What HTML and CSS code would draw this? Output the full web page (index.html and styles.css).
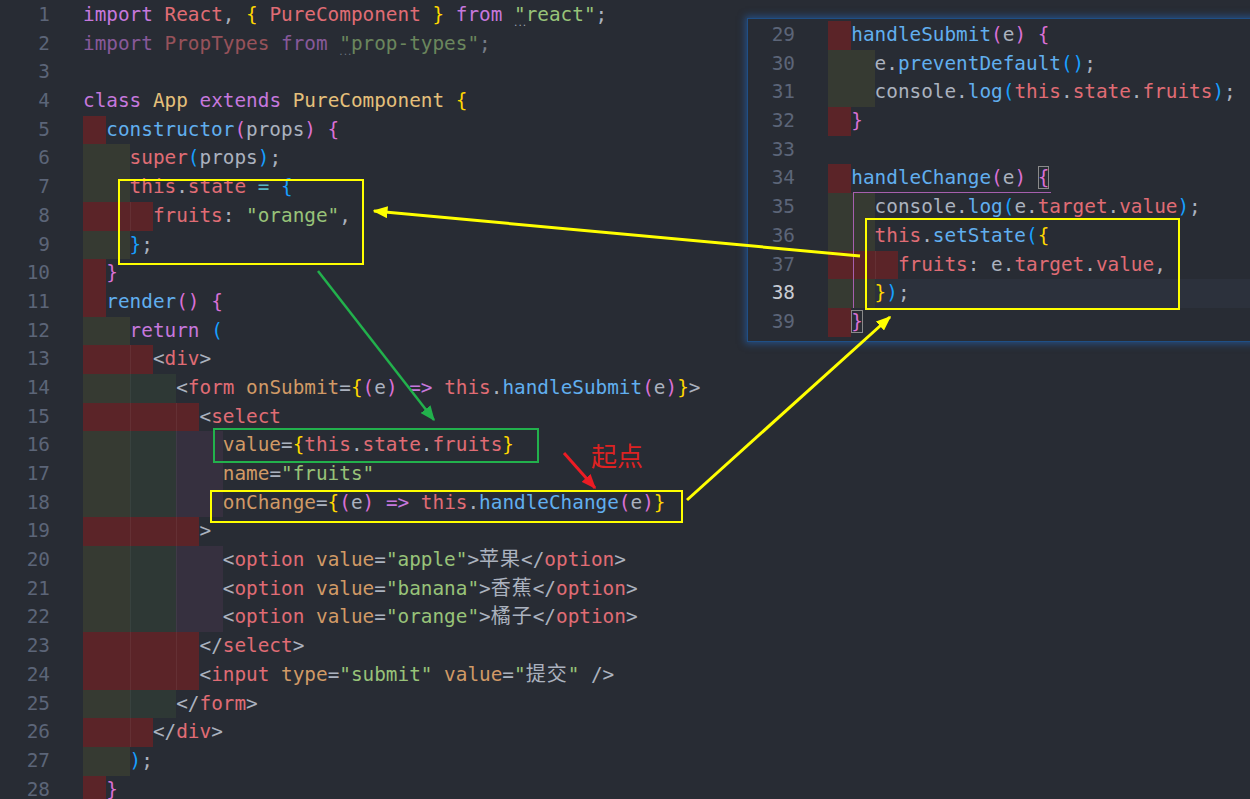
FILE: index.html
```html
<!DOCTYPE html>
<html lang="zh-CN">
<head>
    <meta charset="UTF-8">
    <meta name="viewport" content="width=device-width, initial-scale=1.0">
    <title>App.js</title>
    <link rel="stylesheet" href="styles.css">
</head>
<body>
    <div class="editor">
        <div class="ln"><span class="no">1</span><span class="c"><span class="kw">import</span> <span class="rd">React</span>, <span class="b1">{</span> <span class="rd">PureComponent</span> <span class="b1">}</span> <span class="kw">from</span> <span class="st hint">"react"</span>;</span></div>
        <div class="ln"><span class="no">2</span><span class="c dim"><span class="kw">import</span> <span class="rd">PropTypes</span> <span class="kw">from</span> <span class="st hint">"prop-types"</span>;</span></div>
        <div class="ln"><span class="no">3</span><span class="c"></span></div>
        <div class="ln"><span class="no">4</span><span class="c"><span class="kw">class</span> <span class="cl">App</span> <span class="kw">extends</span> <span class="cl">PureComponent</span> <span class="b1">{</span></span></div>
        <div class="ln"><span class="no">5</span><span class="c"><span class="r">  </span><span class="fn">constructor</span><span class="b2">(</span>props<span class="b2">)</span> <span class="b2">{</span></span></div>
        <div class="ln"><span class="no">6</span><span class="c"><span class="g">    </span><span class="rd">super</span><span class="b3">(</span>props<span class="b3">)</span>;</span></div>
        <div class="ln"><span class="no">7</span><span class="c"><span class="g">    </span><span class="rd">this</span>.<span class="rd">state</span> <span class="op">=</span> <span class="b3">{</span></span></div>
        <div class="ln"><span class="no">8</span><span class="c"><span class="r">    </span><span class="r">  </span><span class="rd">fruits</span>: <span class="st">"orange"</span>,</span></div>
        <div class="ln"><span class="no">9</span><span class="c"><span class="g">    </span><span class="b3">}</span>;</span></div>
        <div class="ln"><span class="no">10</span><span class="c"><span class="r">  </span><span class="b2">}</span></span></div>
        <div class="ln"><span class="no">11</span><span class="c"><span class="r">  </span><span class="fn">render</span><span class="b2">()</span> <span class="b2">{</span></span></div>
        <div class="ln"><span class="no">12</span><span class="c"><span class="g">    </span><span class="kw">return</span> <span class="b3">(</span></span></div>
        <div class="ln"><span class="no">13</span><span class="c"><span class="r">    </span><span class="r">  </span>&lt;<span class="rd">div</span>&gt;</span></div>
        <div class="ln"><span class="no">14</span><span class="c"><span class="g">    </span><span class="t">    </span>&lt;<span class="rd">form</span> <span class="at">onSubmit</span>=<span class="b1">{</span><span class="b2">(</span>e<span class="b2">)</span> <span class="kw">=&gt;</span> <span class="rd">this</span>.<span class="fn">handleSubmit</span><span class="b2">(</span>e<span class="b2">)</span><span class="b1">}</span>&gt;</span></div>
        <div class="ln"><span class="no">15</span><span class="c"><span class="r">    </span><span class="r">    </span><span class="r">  </span>&lt;<span class="rd">select</span></span></div>
        <div class="ln"><span class="no">16</span><span class="c"><span class="g">    </span><span class="t">    </span><span class="p">    </span><span class="at">value</span>=<span class="b1">{</span><span class="rd">this</span>.<span class="rd">state</span>.<span class="rd">fruits</span><span class="b1">}</span></span></div>
        <div class="ln"><span class="no">17</span><span class="c"><span class="g">    </span><span class="t">    </span><span class="p">    </span><span class="at">name</span>=<span class="st">"fruits"</span></span></div>
        <div class="ln"><span class="no">18</span><span class="c"><span class="g">    </span><span class="t">    </span><span class="p">    </span><span class="at">onChange</span>=<span class="b1">{</span><span class="b2">(</span>e<span class="b2">)</span> <span class="kw">=&gt;</span> <span class="rd">this</span>.<span class="fn">handleChange</span><span class="b2">(</span>e<span class="b2">)</span><span class="b1">}</span></span></div>
        <div class="ln"><span class="no">19</span><span class="c"><span class="r">    </span><span class="r">    </span><span class="r">  </span>&gt;</span></div>
        <div class="ln"><span class="no">20</span><span class="c"><span class="g">    </span><span class="t">    </span><span class="p">    </span>&lt;<span class="rd">option</span> <span class="at">value</span>=<span class="st">"apple"</span>&gt;<span class="cjk">苹果</span>&lt;/<span class="rd">option</span>&gt;</span></div>
        <div class="ln"><span class="no">21</span><span class="c"><span class="g">    </span><span class="t">    </span><span class="p">    </span>&lt;<span class="rd">option</span> <span class="at">value</span>=<span class="st">"banana"</span>&gt;<span class="cjk">香蕉</span>&lt;/<span class="rd">option</span>&gt;</span></div>
        <div class="ln"><span class="no">22</span><span class="c"><span class="g">    </span><span class="t">    </span><span class="p">    </span>&lt;<span class="rd">option</span> <span class="at">value</span>=<span class="st">"orange"</span>&gt;<span class="cjk">橘子</span>&lt;/<span class="rd">option</span>&gt;</span></div>
        <div class="ln"><span class="no">23</span><span class="c"><span class="r">    </span><span class="r">    </span><span class="r">  </span>&lt;/<span class="rd">select</span>&gt;</span></div>
        <div class="ln"><span class="no">24</span><span class="c"><span class="r">    </span><span class="r">    </span><span class="r">  </span>&lt;<span class="rd">input</span> <span class="at">type</span>=<span class="st">"submit"</span> <span class="at">value</span>=<span class="st">"<span class="cjk">提交</span>"</span> /&gt;</span></div>
        <div class="ln"><span class="no">25</span><span class="c"><span class="g">    </span><span class="t">    </span>&lt;/<span class="rd">form</span>&gt;</span></div>
        <div class="ln"><span class="no">26</span><span class="c"><span class="r">    </span><span class="r">  </span>&lt;/<span class="rd">div</span>&gt;</span></div>
        <div class="ln"><span class="no">27</span><span class="c"><span class="g">    </span><span class="b3">)</span>;</span></div>
        <div class="ln"><span class="no">28</span><span class="c"><span class="r">  </span><span class="b2">}</span></span></div>
    </div>

    <div class="peek">
        <div class="guide"></div>
        <div class="ln"><span class="no">29</span><span class="c"><span class="r">  </span><span class="fn">handleSubmit</span><span class="b2">(</span>e<span class="b2">)</span> <span class="b2">{</span></span></div>
        <div class="ln"><span class="no">30</span><span class="c"><span class="g">    </span>e.<span class="fn">preventDefault</span><span class="b3">()</span>;</span></div>
        <div class="ln"><span class="no">31</span><span class="c"><span class="g">    </span>console.<span class="fn">log</span><span class="b3">(</span><span class="rd">this</span>.<span class="rd">state</span>.<span class="rd">fruits</span><span class="b3">)</span>;</span></div>
        <div class="ln"><span class="no">32</span><span class="c"><span class="r">  </span><span class="b2">}</span></span></div>
        <div class="ln"><span class="no">33</span><span class="c"></span></div>
        <div class="ln"><span class="no">34</span><span class="c"><span class="r">  </span><span class="fn">handleChange</span><span class="b2">(</span>e<span class="b2">)</span> <span class="b2 m">{</span></span></div>
        <div class="ln"><span class="no">35</span><span class="c"><span class="g">    </span>console.<span class="fn">log</span><span class="b3">(</span>e.<span class="rd">target</span>.<span class="rd">value</span><span class="b3">)</span>;</span></div>
        <div class="ln"><span class="no">36</span><span class="c"><span class="g">    </span><span class="rd">this</span>.<span class="fn">setState</span><span class="b3">(</span><span class="b1">{</span></span></div>
        <div class="ln"><span class="no">37</span><span class="c"><span class="r">    </span><span class="r">  </span><span class="rd">fruits</span>: e.<span class="rd">target</span>.<span class="rd">value</span>,</span></div>
        <div class="ln active"><span class="no">38</span><span class="c"><span class="g">    </span><span class="b1">}</span><span class="b3">)</span>;</span></div>
        <div class="ln"><span class="no">39</span><span class="c"><span class="r">  </span><span class="b2 m">}</span></span></div>
    </div>

    <svg class="notes" width="1250" height="799" viewBox="0 0 1250 799">
        <defs>
            <marker id="ahY" markerWidth="5" markerHeight="4" refX="4.5" refY="2" orient="auto" markerUnits="strokeWidth">
                <path d="M0,0 L5,2 L0,4 z" fill="#ffff00"/>
            </marker>
            <marker id="ahG" markerWidth="6" markerHeight="5" refX="5.5" refY="2.5" orient="auto" markerUnits="strokeWidth">
                <path d="M0,0 L6,2.5 L0,5 z" fill="#22b14c"/>
            </marker>
            <marker id="ahR" markerWidth="5" markerHeight="4" refX="4.5" refY="2" orient="auto" markerUnits="strokeWidth">
                <path d="M0,0 L5,2 L0,4 z" fill="#ec1c24"/>
            </marker>
        </defs>
        <rect x="119" y="180" width="244" height="84" fill="none" stroke="#ffff00" stroke-width="2"/>
        <rect x="214" y="429" width="324" height="33" fill="none" stroke="#22b14c" stroke-width="2"/>
        <rect x="211" y="491" width="471" height="31" fill="none" stroke="#ffff00" stroke-width="2"/>
        <rect x="866" y="219" width="313" height="90" fill="none" stroke="#ffff00" stroke-width="2"/>
        <line x1="860" y1="256" x2="374" y2="211" stroke="#ffff00" stroke-width="3" marker-end="url(#ahY)"/>
        <line x1="318" y1="271" x2="434" y2="420" stroke="#22b14c" stroke-width="2.5" marker-end="url(#ahG)"/>
        <line x1="687" y1="500" x2="890" y2="317" stroke="#ffff00" stroke-width="3" marker-end="url(#ahY)"/>
        <line x1="564" y1="453" x2="595" y2="488" stroke="#ec1c24" stroke-width="3" marker-end="url(#ahR)"/>
        <text x="591" y="466" class="label">起点</text>
    </svg>
</body>
</html>
```

FILE: styles.css
```css
body {
    margin: 0;
    background-color: #282c34;
    color: #abb2bf;
    font-family: "DejaVu Sans Mono", "Noto Sans CJK SC", monospace;
    font-size: 19.35px;
    width: 1250px;
    height: 799px;
    overflow: hidden;
    position: relative;
}
.editor {
    padding-top: 1px;
}
.ln {
    display: flex;
    height: 28.7px;
    line-height: 28.7px;
    white-space: pre;
}
.no {
    width: 50px;
    text-align: right;
    color: #5c6578;
    flex-shrink: 0;
}
.c {
    flex: 1;
    display: block;
    margin-left: 33px;
    white-space: pre;
}

/* indent rainbow */
.r, .g, .t, .p {
    display: inline-block;
    height: 28.7px;
    vertical-align: top;
}
.r { background-color: #5b2428; }
.r + .r { box-shadow: inset 1px 0 rgba(255, 255, 255, 0.06); }
.g { background-color: #363a32; }
.t { background-color: #2e3835; box-shadow: inset 1px 0 rgba(255, 255, 255, 0.05); }
.p { background-color: #36303f; box-shadow: inset 1px 0 rgba(255, 255, 255, 0.05); }

/* syntax */
.kw { color: #c678dd; }
.rd { color: #e06c75; }
.cl { color: #e5c07b; }
.st { color: #98c379; }
.fn { color: #61afef; }
.op { color: #56b6c2; }
.at { color: #d19a66; }
.b1 { color: #ffd700; }
.b2 { color: #da70d6; }
.b3 { color: #179fff; }
.dim { opacity: 0.6; }
.cjk {
    font-family: "Noto Sans CJK SC", sans-serif;
    font-size: 20px;
    line-height: 1;
    letter-spacing: 1px;
    color: #abb2bf;
}
.hint {
    position: relative;
}
.hint::after {
    content: "...";
    position: absolute;
    left: -1px;
    top: 6px;
    font-size: 9px;
    letter-spacing: -1px;
    color: #9da5b4;
}

/* peek window */
.peek {
    position: absolute;
    left: 747px;
    top: 18px;
    width: 520px;
    height: 320px;
    padding-top: 2px;
    background-color: #282c34;
    border: 1px solid #1f4f86;
    box-shadow: 0 0 7px 2px rgba(36, 104, 190, 0.55);
}
.peek .no {
    width: 47px;
}
.peek .active .no {
    color: #c8ccd4;
}
.peek .active .c {
    background-color: #2c313c;
}
.m {
    outline: 1px solid #8a8a8a;
    outline-offset: -1px;
}
.guide {
    position: absolute;
    left: 105px;
    top: 173px;
    width: 197px;
    height: 115px;
    border-left: 1px solid #a65fae;
    border-top: 1px solid #a65fae;
}

/* annotations */
.notes {
    position: absolute;
    left: 0;
    top: 0;
    pointer-events: none;
}
.label {
    font-family: "Noto Sans CJK SC", sans-serif;
    font-size: 26px;
    fill: #dd2222;
}
```
